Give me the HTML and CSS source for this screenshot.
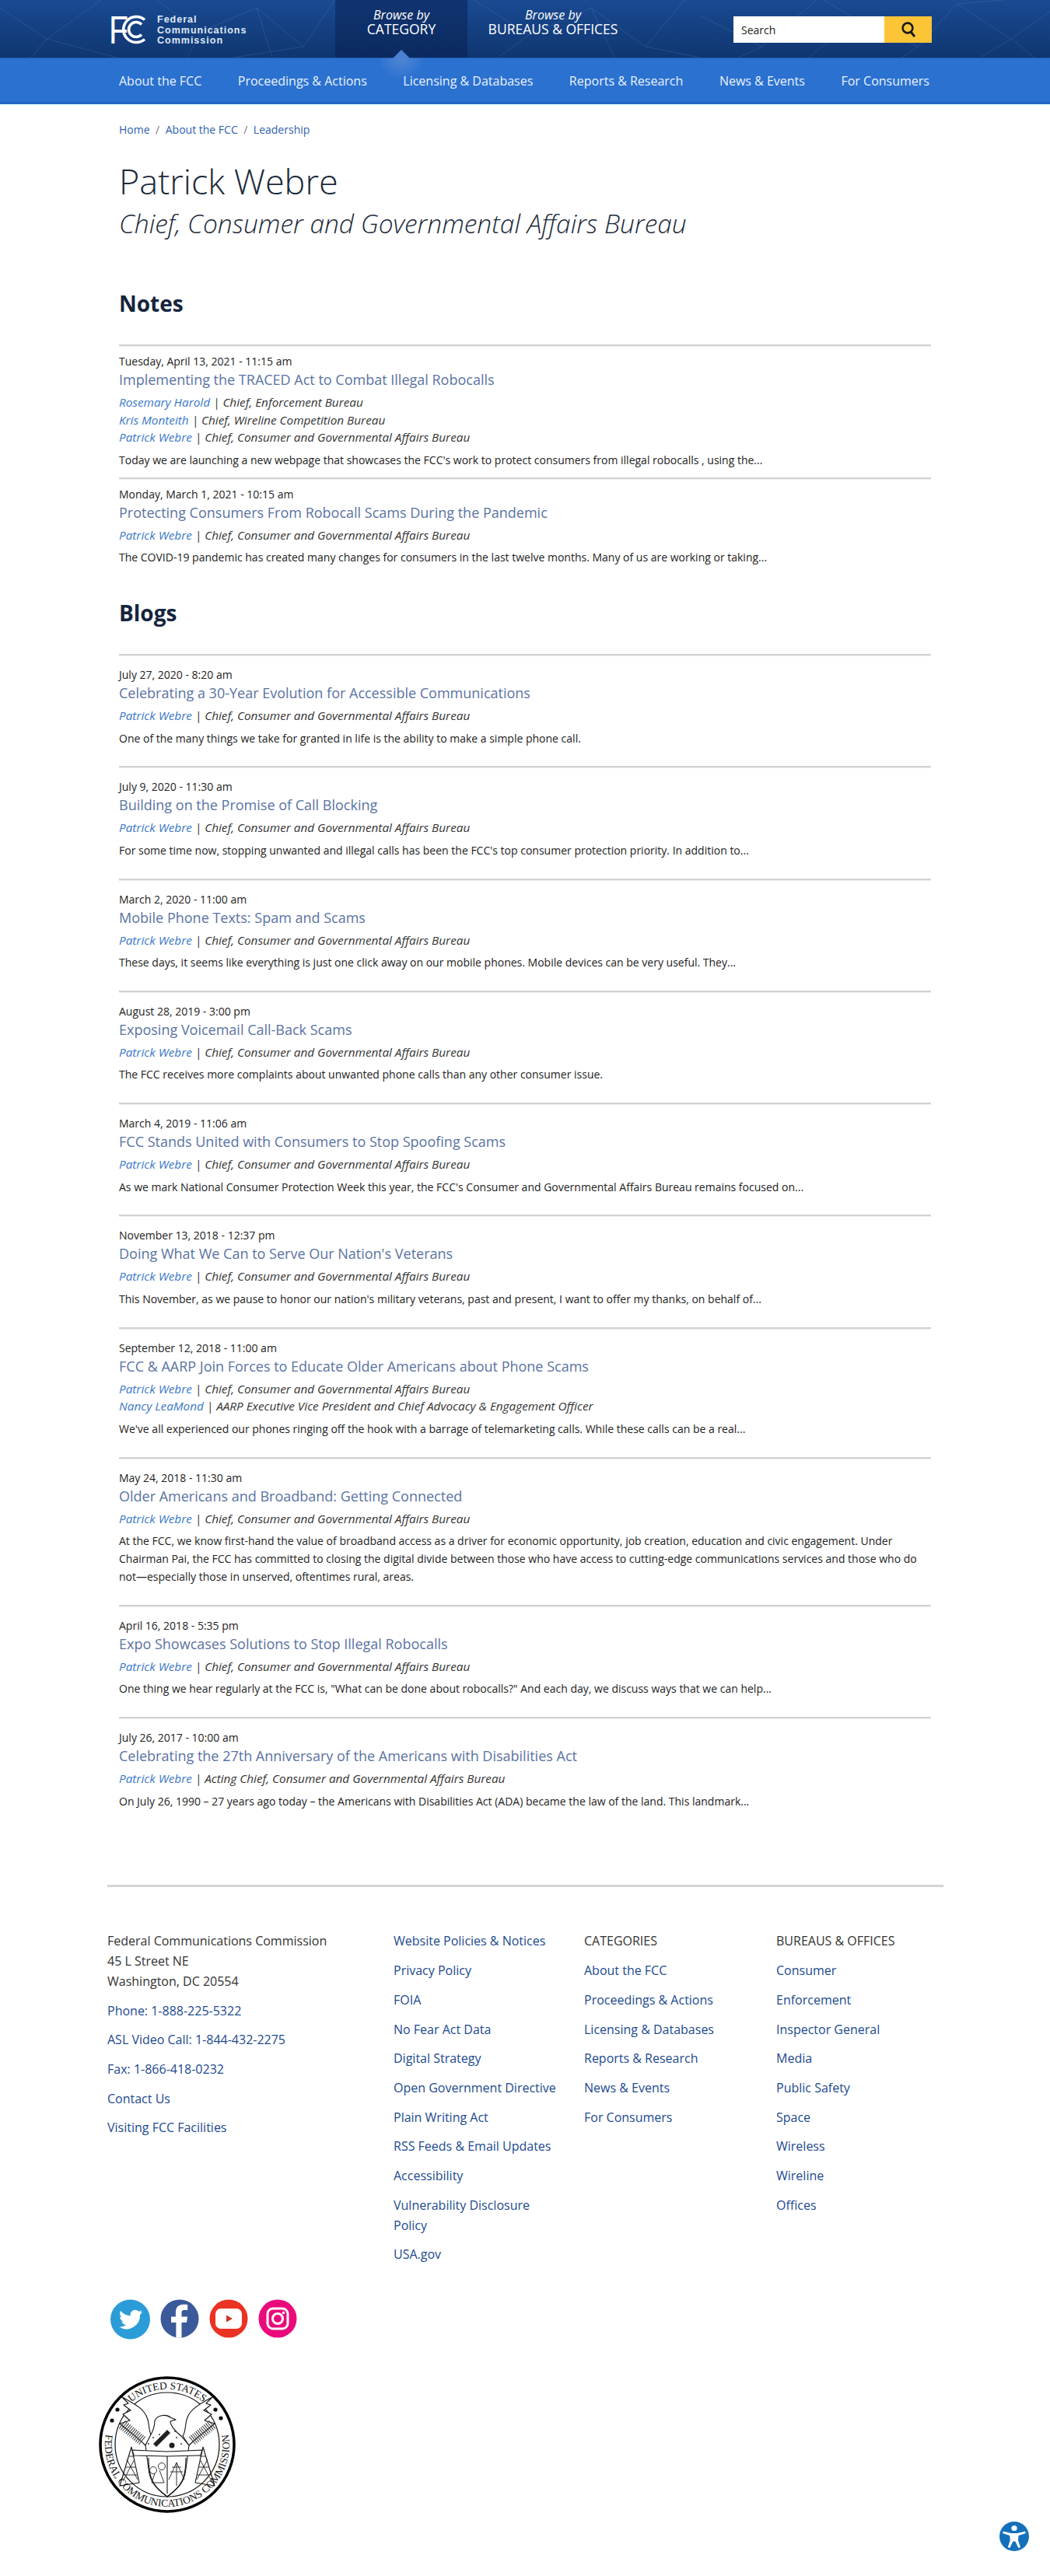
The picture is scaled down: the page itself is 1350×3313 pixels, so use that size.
FILE: index.html
```html
<!DOCTYPE html>
<html lang="en">
<head>
    <meta charset="UTF-8">
    <title>Patrick Webre | Federal Communications Commission</title>
    <link rel="stylesheet" href="styles.css">
</head>
<body>
    <header class="masthead">
        <svg class="mesh" width="1350" height="74" viewBox="0 0 1350 74" aria-hidden="true">
            <path d="M0 10L60 50L130 0M60 50L40 74M60 50L150 74M200 0L260 40L330 10L390 60L430 0M260 40L240 74M330 10L350 74M390 60L300 74M610 0L680 45L760 10L830 60L880 0M680 45L640 74M760 10L790 74M830 60L900 74M900 20L980 60L1050 0M980 60L950 74M1040 74L1100 25L1180 60L1230 5L1300 50L1350 15M1100 25L1060 0M1180 60L1160 74M1300 50L1260 74M1300 50L1330 74M1230 5L1290 0" fill="none" stroke="#6f94cc" stroke-width="1" opacity=".22"/>
        </svg>
        <div class="masthead-inner">
            <a class="logo" href="#">
                <svg class="logo-mark" width="46" height="38" viewBox="0 0 46 38" aria-hidden="true">
                    <text class="logo-f" x="-3" y="37" textLength="25" lengthAdjust="spacingAndGlyphs">F</text>
                    <path d="M43 6.500A16.500 16.500 0 1 0 43 31.500" fill="none" stroke="#fff" stroke-width="3.600"/>
                    <path d="M39 12.500A9.500 9.500 0 1 0 39 25.500" fill="none" stroke="#fff" stroke-width="3.600"/>
                </svg>
                <span class="logo-text">Federal<br>Communications<br>Commission</span>
            </a>
            <a class="browse-tab is-active" href="#"><em>Browse by</em>CATEGORY</a>
            <a class="browse-tab" href="#"><em>Browse by</em>BUREAUS &amp; OFFICES</a>
            <form class="search">
                <span class="search-field">Search</span>
                <button class="search-btn" type="button" aria-label="Search">
                    <svg width="20" height="22" viewBox="0 0 20 22" aria-hidden="true">
                        <circle cx="9" cy="9" r="6.400" fill="none" stroke="#1b1b1b" stroke-width="2.600"/>
                        <path d="M13 14l5 6" stroke="#1b1b1b" stroke-width="3" fill="none"/>
                    </svg>
                </button>
            </form>
        </div>
    </header>

    <nav class="mainnav">
        <span class="tab-pointer"></span>
        <div class="mainnav-inner">
            <a href="#">About the FCC</a>
            <a href="#">Proceedings &amp; Actions</a>
            <a href="#">Licensing &amp; Databases</a>
            <a href="#">Reports &amp; Research</a>
            <a href="#">News &amp; Events</a>
            <a href="#">For Consumers</a>
        </div>
    </nav>

    <main class="content">
        <div class="crumbs"><a href="#">Home</a><i>/</i><a href="#">About the FCC</a><i>/</i><a href="#">Leadership</a></div>
        <h1>Patrick Webre</h1>
        <p class="job-title">Chief, Consumer and Governmental Affairs Bureau</p>

        <h2 class="notes-head">Notes</h2>
        <article class="item note">
            <div class="date">Tuesday, April 13, 2021 - 11:15 am</div>
            <h3><a href="#">Implementing the TRACED Act to Combat Illegal Robocalls</a></h3>
            <div class="by"><a href="#">Rosemary Harold</a> | Chief, Enforcement Bureau</div>
            <div class="by"><a href="#">Kris Monteith</a> | Chief, Wireline Competition Bureau</div>
            <div class="by"><a href="#">Patrick Webre</a> | Chief, Consumer and Governmental Affairs Bureau</div>
            <p>Today we are launching a new webpage that showcases the FCC's work to protect consumers from illegal robocalls , using the...</p>
        </article>
        <article class="item note">
            <div class="date">Monday, March 1, 2021 - 10:15 am</div>
            <h3><a href="#">Protecting Consumers From Robocall Scams During the Pandemic</a></h3>
            <div class="by"><a href="#">Patrick Webre</a> | Chief, Consumer and Governmental Affairs Bureau</div>
            <p>The COVID-19 pandemic has created many changes for consumers in the last twelve months. Many of us are working or taking...</p>
        </article>

        <h2 class="blogs-head">Blogs</h2>
        <article class="item">
            <div class="date">July 27, 2020 - 8:20 am</div>
            <h3><a href="#">Celebrating a 30-Year Evolution for Accessible Communications</a></h3>
            <div class="by"><a href="#">Patrick Webre</a> | Chief, Consumer and Governmental Affairs Bureau</div>
            <p>One of the many things we take for granted in life is the ability to make a simple phone call.</p>
        </article>
        <article class="item">
            <div class="date">July 9, 2020 - 11:30 am</div>
            <h3><a href="#">Building on the Promise of Call Blocking</a></h3>
            <div class="by"><a href="#">Patrick Webre</a> | Chief, Consumer and Governmental Affairs Bureau</div>
            <p>For some time now, stopping unwanted and illegal calls has been the FCC's top consumer protection priority. In addition to...</p>
        </article>
        <article class="item">
            <div class="date">March 2, 2020 - 11:00 am</div>
            <h3><a href="#">Mobile Phone Texts: Spam and Scams</a></h3>
            <div class="by"><a href="#">Patrick Webre</a> | Chief, Consumer and Governmental Affairs Bureau</div>
            <p>These days, it seems like everything is just one click away on our mobile phones. Mobile devices can be very useful. They...</p>
        </article>
        <article class="item">
            <div class="date">August 28, 2019 - 3:00 pm</div>
            <h3><a href="#">Exposing Voicemail Call-Back Scams</a></h3>
            <div class="by"><a href="#">Patrick Webre</a> | Chief, Consumer and Governmental Affairs Bureau</div>
            <p>The FCC receives more complaints about unwanted phone calls than any other consumer issue.</p>
        </article>
        <article class="item">
            <div class="date">March 4, 2019 - 11:06 am</div>
            <h3><a href="#">FCC Stands United with Consumers to Stop Spoofing Scams</a></h3>
            <div class="by"><a href="#">Patrick Webre</a> | Chief, Consumer and Governmental Affairs Bureau</div>
            <p>As we mark National Consumer Protection Week this year, the FCC's Consumer and Governmental Affairs Bureau remains focused on...</p>
        </article>
        <article class="item">
            <div class="date">November 13, 2018 - 12:37 pm</div>
            <h3><a href="#">Doing What We Can to Serve Our Nation's Veterans</a></h3>
            <div class="by"><a href="#">Patrick Webre</a> | Chief, Consumer and Governmental Affairs Bureau</div>
            <p>This November, as we pause to honor our nation's military veterans, past and present, I want to offer my thanks, on behalf of...</p>
        </article>
        <article class="item">
            <div class="date">September 12, 2018 - 11:00 am</div>
            <h3><a href="#">FCC &amp; AARP Join Forces to Educate Older Americans about Phone Scams</a></h3>
            <div class="by"><a href="#">Patrick Webre</a> | Chief, Consumer and Governmental Affairs Bureau</div>
            <div class="by"><a href="#">Nancy LeaMond</a> | AARP Executive Vice President and Chief Advocacy &amp; Engagement Officer</div>
            <p>We've all experienced our phones ringing off the hook with a barrage of telemarketing calls. While these calls can be a real...</p>
        </article>
        <article class="item">
            <div class="date">May 24, 2018 - 11:30 am</div>
            <h3><a href="#">Older Americans and Broadband: Getting Connected</a></h3>
            <div class="by"><a href="#">Patrick Webre</a> | Chief, Consumer and Governmental Affairs Bureau</div>
            <p>At the FCC, we know first-hand the value of broadband access as a driver for economic opportunity, job creation, education and civic engagement. Under Chairman Pai, the FCC has committed to closing the digital divide between those who have access to cutting-edge communications services and those who do not—especially those in unserved, oftentimes rural, areas.</p>
        </article>
        <article class="item">
            <div class="date">April 16, 2018 - 5:35 pm</div>
            <h3><a href="#">Expo Showcases Solutions to Stop Illegal Robocalls</a></h3>
            <div class="by"><a href="#">Patrick Webre</a> | Chief, Consumer and Governmental Affairs Bureau</div>
            <p>One thing we hear regularly at the FCC is, "What can be done about robocalls?" And each day, we discuss ways that we can help...</p>
        </article>
        <article class="item">
            <div class="date">July 26, 2017 - 10:00 am</div>
            <h3><a href="#">Celebrating the 27th Anniversary of the Americans with Disabilities Act</a></h3>
            <div class="by"><a href="#">Patrick Webre</a> | Acting Chief, Consumer and Governmental Affairs Bureau</div>
            <p>On July 26, 1990 – 27 years ago today – the Americans with Disabilities Act (ADA) became the law of the land. This landmark...</p>
        </article>
    </main>

    <footer class="footer">
        <div class="footer-cols">
            <div class="fcol">
                <div class="address">Federal Communications Commission<br>45 L Street NE<br>Washington, DC 20554</div>
                <a href="#">Phone: 1-888-225-5322</a>
                <a href="#">ASL Video Call: 1-844-432-2275</a>
                <a href="#">Fax: 1-866-418-0232</a>
                <a href="#">Contact Us</a>
                <a href="#">Visiting FCC Facilities</a>
            </div>
            <div class="fcol">
                <a href="#">Website Policies &amp; Notices</a>
                <a href="#">Privacy Policy</a>
                <a href="#">FOIA</a>
                <a href="#">No Fear Act Data</a>
                <a href="#">Digital Strategy</a>
                <a href="#">Open Government Directive</a>
                <a href="#">Plain Writing Act</a>
                <a href="#">RSS Feeds &amp; Email Updates</a>
                <a href="#">Accessibility</a>
                <a href="#">Vulnerability Disclosure Policy</a>
                <a href="#">USA.gov</a>
            </div>
            <div class="fcol">
                <div class="fhead">CATEGORIES</div>
                <a href="#">About the FCC</a>
                <a href="#">Proceedings &amp; Actions</a>
                <a href="#">Licensing &amp; Databases</a>
                <a href="#">Reports &amp; Research</a>
                <a href="#">News &amp; Events</a>
                <a href="#">For Consumers</a>
            </div>
            <div class="fcol">
                <div class="fhead">BUREAUS &amp; OFFICES</div>
                <a href="#">Consumer</a>
                <a href="#">Enforcement</a>
                <a href="#">Inspector General</a>
                <a href="#">Media</a>
                <a href="#">Public Safety</a>
                <a href="#">Space</a>
                <a href="#">Wireless</a>
                <a href="#">Wireline</a>
                <a href="#">Offices</a>
            </div>
        </div>

        <div class="social">
            <a href="#" aria-label="Twitter">
                <svg width="51" height="52" viewBox="0 0 51 52">
                    <circle cx="25.500" cy="26" r="25.500" fill="#2b9cd8"/>
                    <path d="M41 16.600c-1.100.5-2.300.8-3.500 1 1.300-.8 2.200-2 2.700-3.400-1.200.7-2.500 1.200-3.900 1.500a6.200 6.200 0 0 0-10.500 5.600c-5.100-.3-9.700-2.700-12.700-6.400-1.700 2.900-.8 6.500 1.900 8.300-1 0-2-.3-2.800-.8 0 3 2.100 5.600 5 6.200-.9.200-1.800.3-2.800.1.800 2.500 3.100 4.200 5.800 4.300a12.400 12.400 0 0 1-9.200 2.600 17.500 17.500 0 0 0 27-15.600c1.100-.9 2.200-2 3-3.400z" fill="#fff"/>
                </svg>
            </a>
            <a href="#" aria-label="Facebook">
                <svg width="50" height="50" viewBox="0 0 50 50">
                    <circle cx="25" cy="25" r="24.500" fill="#3b5a9a"/>
                    <path d="M27.500 49.500V30h6.500l1-7.600h-7.500v-4.800c0-2.200.6-3.700 3.700-3.700h4V7c-.7-.1-3-.3-5.700-.3-5.700 0-9.600 3.500-9.600 9.900v5.800H14V30h6.400v19.500z" fill="#fff"/>
                </svg>
            </a>
            <a href="#" aria-label="YouTube">
                <svg width="50" height="50" viewBox="0 0 50 50">
                    <circle cx="25" cy="25" r="24.500" fill="#ea3323"/>
                    <rect x="8" y="12" width="34" height="26" rx="7" fill="#fff"/>
                    <path d="M22 20.500l8 4.500-8 4.500z" fill="#c9372c"/>
                </svg>
            </a>
            <a href="#" aria-label="Instagram">
                <svg width="50" height="50" viewBox="0 0 50 50">
                    <circle cx="25" cy="25" r="24.500" fill="#ea0a7c"/>
                    <rect x="12" y="12" width="26" height="26" rx="7" fill="none" stroke="#fff" stroke-width="3"/>
                    <circle cx="25" cy="25" r="6.500" fill="none" stroke="#fff" stroke-width="3"/>
                    <circle cx="32.500" cy="17.500" r="1.800" fill="#fff"/>
                </svg>
            </a>
        </div>

        <svg class="seal" width="176" height="178" viewBox="0 0 176 178" role="img" aria-label="Seal of the Federal Communications Commission">
            <defs>
                <path id="sealTop" d="M20 66A72 72 0 0 1 156 66"/>
                <path id="sealBottom" d="M13.400 60A80 80 0 1 0 162.600 60"/>
            </defs>
            <circle cx="88" cy="89" r="86" fill="#fff" stroke="#000" stroke-width="3.500"/>
            <circle cx="88" cy="89" r="67" fill="none" stroke="#111" stroke-width="1.200"/>
            <text class="seal-text"><textPath href="#sealTop" startOffset="50%" text-anchor="middle">UNITED STATES</textPath></text>
            <text class="seal-text"><textPath href="#sealBottom" startOffset="50%" text-anchor="middle">FEDERAL COMMUNICATIONS COMMISSION</textPath></text>
            <g class="seal-star"><circle cx="24" cy="44" r="2.600"/><circle cx="17" cy="58" r="2.600"/><circle cx="150" cy="44" r="2.600"/><circle cx="157" cy="55" r="2.600"/></g>
            <g fill="#fff" stroke="#111" stroke-width="1.100" stroke-linejoin="round">
                <path d="M30 28C48 38 62 44 64 62 65 70 66 76 68 78L60 90C48 78 36 70 27 62L40 58 31 50 41 45 32 38 38 36z"/>
                <path d="M146 28C128 38 114 44 112 62 111 70 110 76 108 78L116 90C128 78 140 70 149 62L136 58 145 50 135 45 144 38 138 36z"/>
                <path d="M66 78C72 68 72 62 72 58 76 50 88 50 92 54L99 57 92 59C92 64 98 72 106 78L116 90 112 120C110 140 100 146 88 156 76 146 66 140 64 120L60 90z"/>
                <path d="M43 96L88 98 133 96 131 103 88 104 45 103z"/>
                <path d="M88 104V152M64 106C64 130 68 142 88 156 108 142 112 130 112 106" fill="none"/>
                <path d="M27 142L42 92 52 138zM149 142L134 92 124 138z" fill="none"/>
            </g>
            <g fill="none" stroke="#333" stroke-width="1">
                <path d="M34 118H48M31 128H50M38 104H46M142 118H128M145 128H126M138 104H130M36 108L50 134M140 108L126 134M46 108L31 136M130 108L145 136"/>
                <path d="M30 63L56 84M146 63L120 84" stroke-width="13" stroke-dasharray="1 1.700"/>
                <path d="M100 112V142M92 124H108M94 118H106M90 134L100 112 110 134"/>
                <circle cx="70" cy="122" r="4.500"/><circle cx="81" cy="117" r="4.500"/>
                <path d="M72 126L68 138H84L78 122"/>
            </g>
            <g fill="#222"><path d="M70 88L88 70 92 74 74 92z"/><circle cx="94" cy="90" r="3.500"/><circle cx="70" cy="80" r=".9"/><circle cx="78" cy="76" r=".9"/><circle cx="64" cy="88" r=".9"/><circle cx="100" cy="80" r=".9"/><circle cx="106" cy="88" r=".9"/><circle cx="98" cy="72" r=".9"/></g>
        </svg>
    </footer>

    <a class="a11y-btn" href="#" aria-label="Accessibility options">
        <svg width="40" height="40" viewBox="0 0 40 40">
            <circle cx="20" cy="20" r="19" fill="#1470bb"/>
            <circle cx="20" cy="9.500" r="3.600" fill="#fff"/>
            <path d="M6 13.500l10 2.500h8l10-2.500.8 2.500-9.300 3-.5 6 3 9-2.600 1-4-8.500h-3l-4 8.500-2.600-1 3-9-.5-6-9.300-3z" fill="#fff"/>
        </svg>
    </a>
</body>
</html>
```

FILE: styles.css
```css
body {
    margin: 0;
    font-family: "Open Sans", "Noto Sans", Arial, sans-serif;
    font-size: 14px;
    color: #222;
    background: #fff;
}
a {
    text-decoration: none;
}

/* top bar */
.masthead {
    position: relative;
    height: 74px;
    background: linear-gradient(#1a4a92, #0f3670);
    overflow: hidden;
}
.mesh {
    position: absolute;
    left: 0;
    top: 0;
}
.masthead-inner {
    position: relative;
    width: 1055px;
    height: 74px;
    margin-left: 143px;
    display: flex;
}
.logo {
    display: flex;
    width: 288px;
    padding-top: 19px;
    box-sizing: border-box;
    color: #fff;
}
.logo-mark {
    flex: none;
    overflow: visible;
}
.logo-f {
    font-family: "Liberation Sans", Arial, sans-serif;
    font-size: 50px;
    fill: #fff;
}
.logo-text {
    margin-left: 13px;
    font-family: "Liberation Sans", Arial, sans-serif;
    font-size: 12.500px;
    font-weight: bold;
    line-height: 13.500px;
    letter-spacing: 1px;
    color: #dfe8f5;
}
.browse-tab {
    width: 170px;
    padding-top: 11px;
    box-sizing: border-box;
    text-align: center;
    color: #fff;
    font-size: 17.500px;
    line-height: 19px;
    white-space: nowrap;
}
.browse-tab em {
    display: block;
    font-size: 16px;
    line-height: 17px;
}
.browse-tab.is-active {
    background: rgba(8, 30, 80, .5);
}
.browse-tab + .browse-tab {
    width: 220px;
    margin-right: 122px;
}
.search {
    display: flex;
    margin: 21px 0 0 0;
    height: 34px;
}
.search-field {
    box-sizing: border-box;
    width: 194px;
    padding-left: 10px;
    background: #fff;
    color: #222;
    font-size: 14px;
    line-height: 36px;
}
.search-btn {
    width: 61px;
    border: 0;
    padding: 0;
    background: #fcc538;
}
.search-btn svg {
    display: block;
    margin: 0 auto;
}

/* blue nav */
.mainnav {
    position: relative;
    box-sizing: border-box;
    height: 60px;
    background: #2b71d0;
    border-top: 1px solid #1d57a8;
    border-bottom: 3px solid #2465c0;
    box-shadow: 0 1px 1px #dff;
}
.tab-pointer {
    position: absolute;
    left: 486px;
    top: 0;
    width: 60px;
    height: 28px;
    background: radial-gradient(ellipse at center top, #5286d6, rgba(43, 113, 208, 0) 70%);
}
.tab-pointer::before {
    content: "";
    position: absolute;
    left: 19px;
    top: -11px;
    border: 11px solid transparent;
    border-top: 0;
    border-bottom-color: #4a80d2;
}
.mainnav-inner {
    position: relative;
    width: 1042px;
    margin-left: 153px;
    display: flex;
    justify-content: space-between;
    line-height: 58px;
    font-size: 16px;
}
.mainnav-inner a {
    color: #eaf1fb;
}

/* main column */
.content {
    width: 1044px;
    margin-left: 153px;
}
.crumbs {
    padding-top: 23px;
    font-size: 14px;
    line-height: 20px;
    color: #777;
}
.crumbs a {
    color: #2f62b0;
}
.crumbs i {
    margin: 0 7.500px;
    font-style: normal;
}
h1 {
    margin: 26px 0 0;
    font-size: 45px;
    line-height: 60px;
    font-weight: 300;
    color: #1c2a3a;
}
.job-title {
    margin: 0;
    font-size: 33.500px;
    line-height: 48px;
    font-style: italic;
    font-weight: 300;
    color: #1c2a3a;
}
h2 {
    margin: 0;
    font-size: 28px;
    line-height: 38px;
    font-weight: 700;
    color: #15253d;
}
.notes-head {
    margin-top: 60px;
    margin-bottom: 34px;
}
.blogs-head {
    margin-top: 30px;
    margin-bottom: 34px;
}
.item {
    border-top: 2px solid #d2d2d2;
    padding: 14px 0 24.800px;
    box-shadow: inset 0 1px 0 #eee;
}
.item.note {
    padding: 9px 0 11px;
}
.date {
    line-height: 22px;
}
h3 {
    margin: 0;
    font-size: 18px;
    line-height: 24px;
    font-weight: 400;
}
h3 a {
    color: #5a73a3;
}
.by {
    font-size: 15.300px;
    font-style: italic;
    line-height: 22.500px;
    color: #333;
}
h3 + .by {
    margin-top: 6px;
}
.by a {
    color: #3a78c9;
}
.item p {
    margin: 6px 0 0;
    line-height: 23px;
}

/* footer */
.footer {
    width: 1075px;
    margin: 72px 0 0 138px;
    border-top: 3px solid #d4d4d4;
    padding-top: 57px;
    padding-bottom: 80px;
}
.footer-cols {
    display: grid;
    grid-template-columns: 368px 245px 247px 215px;
    font-size: 16px;
    line-height: 25.700px;
}
.fcol a,
.fhead,
.address {
    display: block;
    margin-bottom: 12px;
}
.fcol {
    padding-right: 10px;
}
.fcol:nth-child(2) {
    padding-right: 30px;
}
.fcol a {
    color: #1c4a8f;
}
.fhead,
.address {
    color: #333;
}
.social {
    display: flex;
    align-items: center;
    gap: 13px;
    margin: 32px 0 0 4px;
}
.social a {
    display: block;
    height: 52px;
}
.seal {
    display: block;
    margin: 46px 0 0 -11px;
}
.seal-text {
    font-family: "Liberation Serif", serif;
    font-size: 13.500px;
    fill: #111;
}
.seal-star {
    fill: #111;
}

/* floating help button */
.a11y-btn {
    position: fixed;
    right: 26px;
    bottom: 31px;
    width: 40px;
    height: 40px;
}
```
